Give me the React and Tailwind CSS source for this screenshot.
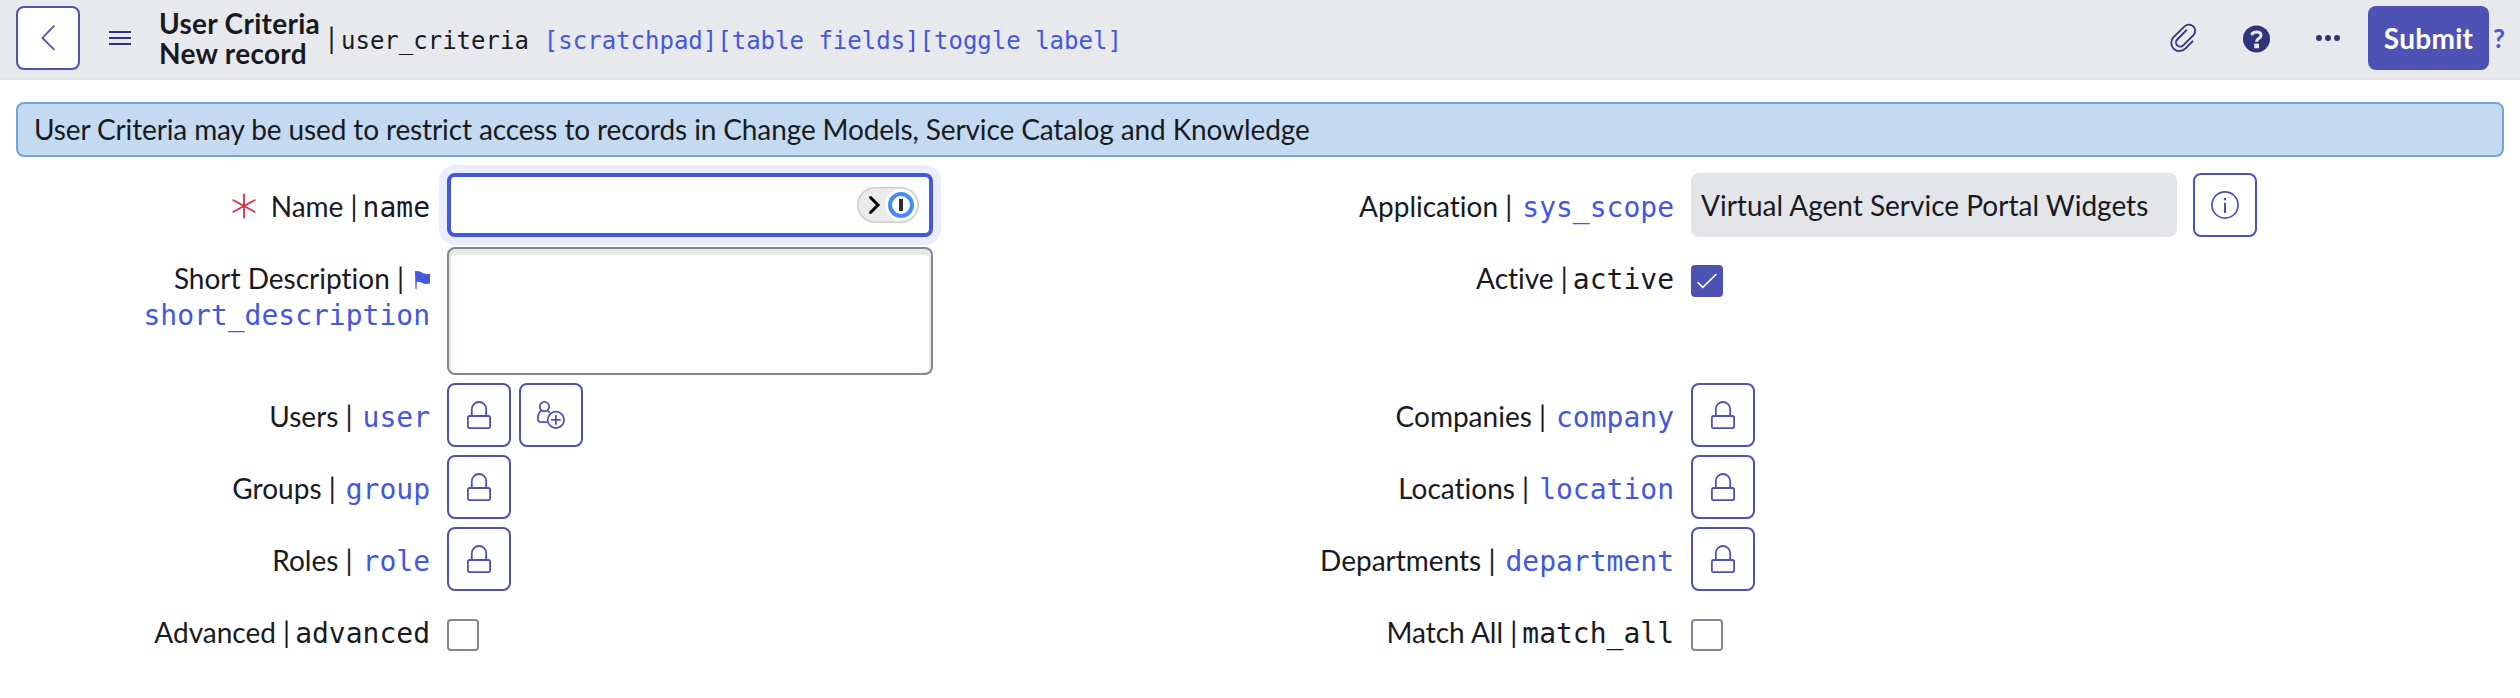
const SANS = "font-['Lato','Liberation_Sans',sans-serif]";
const MONO = "font-['DejaVu_Sans_Mono',monospace]";

function LockIcon() {
  return (
    <svg width="24" height="28" viewBox="0 0 24 28" fill="none" stroke="#4f52b5" strokeWidth="1.8">
      <rect x="0.9" y="15" width="22.2" height="12.1" rx="1.6" />
      <path d="M4.8 15V8.200a7.200 7.200 0 0 1 14.400 0V15" />
    </svg>
  );
}

function UserAddIcon() {
  return (
    <svg width="28" height="28" viewBox="0 0 28 28" fill="none" stroke="#4f52b5" strokeWidth="1.8">
      <circle cx="7.4" cy="5.6" r="4.7" />
      <path d="M4.300 9.400C2 11 .9 14 .9 17.400c0 2.400 1.300 3.700 3.600 3.700h5.600" />
      <path d="M10.500 9.400c1 .6 1.700 1.400 2.300 2.400" />
      <circle cx="18.900" cy="18.900" r="8.200" />
      <path d="M18.900 14v9.800M14 18.900h9.800" />
    </svg>
  );
}

function IconButton({ children, label }) {
  return (
    <button
      aria-label={label}
      className="flex size-16 shrink-0 items-center justify-center rounded-lg border-2 border-[#4f52b5] bg-white"
    >
      {children}
    </button>
  );
}

function Checkbox({ checked }) {
  return (
    <span
      role="checkbox"
      aria-checked={!!checked}
      className={
        checked
          ? "mt-5 flex size-8 items-center justify-center rounded-[4px] bg-[#4f52b5]"
          : "mt-5 flex size-8 rounded-[4px] border-2 border-[#81868f] bg-white"
      }
    >
      {checked && (
        <svg width="20" height="16" viewBox="0 0 20 16" fill="none" stroke="#fff" strokeWidth="1.6">
          <path d="M.6 9.200l5.200 5.200L19.400 1" />
        </svg>
      )}
    </span>
  );
}

function Row({ label, field, link, required, flag, height = "h-[72px]", children }) {
  return (
    <div className={`flex ${height} items-start`}>
      <div className="w-[430px] shrink-0 pt-[15px] text-right leading-9 whitespace-nowrap">
        {required && (
          <svg className="mr-[15px] inline-block align-[-2px]" width="24" height="26" viewBox="0 0 24 26" stroke="#d4313f" strokeWidth="1.8">
            <path d="M12 .8v24.400M.6 6.800l22.800 12.400M23.400 6.800L.6 19.200" />
          </svg>
        )}
        <span>{label} |</span>
        {flag && (
          <svg className="ml-[11px] inline-block align-[0px]" width="15" height="18" viewBox="0 0 15 18" fill="#4457df">
            <path d="M0 .3C3-.4 5.500 .7 7.500 1.900c2.200 1.200 4.500 1.400 7.500 .8v9.800c-3 .8-5.600 .4-7.800-.6-1.900-.9-3.600-1.200-5.500-1V18H.5z" />
          </svg>
        )}
        {flag && <br />}
        <span className={`${MONO} ${link ? "text-[#4457df]" : ""} ${flag ? "" : link ? "ml-[10px]" : "ml-[5px]"}`}>{field}</span>
      </div>
      <div className="ml-[17px] flex gap-2">{children}</div>
    </div>
  );
}

function LockRow({ label, field, extra }) {
  return (
    <Row label={label} field={field} link>
      <IconButton label="Unlock">
        <LockIcon />
      </IconButton>
      {extra}
    </Row>
  );
}

export default function App() {
  return (
    <div className={`${SANS} h-[698px] w-[2520px] overflow-hidden bg-white text-[28px] text-[#181a1f] [font-variant-ligatures:none]`}>
      <header className="flex h-20 items-start border-b-2 border-[#e3e4e8] bg-[#e8e9ed] pt-1.5 pl-4">
        <IconButton label="Back">
          <svg width="14" height="28" viewBox="0 0 14 28" fill="none" stroke="#4f52b5" strokeWidth="1.8">
            <path d="M13.400 1.700L1.400 13.900l12 12" />
          </svg>
        </IconButton>
        <svg className="mt-[24px] ml-[29px]" width="22" height="16" viewBox="0 0 22 16" stroke="#30347a" strokeWidth="2">
          <path d="M0 2h22M0 8h22M0 14h22" />
        </svg>
        <h1 className="mt-[2px] ml-[28px] w-[163px] leading-[30px] font-bold tracking-[0.3px] whitespace-nowrap">
          User Criteria
          <br />
          New record
        </h1>
        <div className="mt-[14px] flex items-baseline leading-[36px] whitespace-nowrap">
          <span className="ml-[6px]">|</span>
          <span className={`${MONO} ml-[6px] text-[24px]`}>user_criteria</span>
          <span className={`${MONO} ml-[15px] text-[24px] text-[#4457df]`}>[scratchpad][table fields][toggle label]</span>
        </div>
        <div className="ml-auto flex items-start pr-[15px]">
          <svg className="mt-[17px] mr-[46px]" width="27" height="30" viewBox="0 0 27 30" fill="none" stroke="#30347a" strokeWidth="1.8" strokeLinecap="round">
            <path d="M22.500 18.300l-7.200 7.400a8.200 8.200 0 0 1-11.700-11.500L14.800 3.200a6.200 6.200 0 0 1 8.900 8.600L13.200 22.400a4.200 4.200 0 0 1-6-5.900l9.300-9.300" />
          </svg>
          <svg className="mt-[19px] mr-[46px]" width="27" height="28" viewBox="0 0 27 28">
            <circle cx="13.500" cy="13.900" r="13.500" fill="#30347a" />
            <path d="M9.200 10.200V8.600c1.200-1.200 2.600-1.600 4.300-1.600 3 0 4.500 1.400 4.500 3.500 0 2.800-4.500 2.700-4.500 6.200" fill="none" stroke="#e8e9ed" strokeWidth="3" />
            <path d="M11.200 18.600h4.800v4.700h-4.800z" fill="#e8e9ed" />
          </svg>
          <svg className="mt-[29px] mr-[28px]" width="24" height="6" viewBox="0 0 24 6" fill="#30347a">
            <circle cx="3" cy="3" r="3" />
            <circle cx="12" cy="3" r="3" />
            <circle cx="21" cy="3" r="3" />
          </svg>
          <button className="h-16 w-[121px] rounded-lg bg-[#4f52b5] font-bold tracking-[0.3px] text-white">Submit</button>
          <span className="mt-[14px] ml-[4px] text-[26px] leading-9 font-bold text-[#4457df]">?</span>
        </div>
      </header>

      <div className="mx-4 mt-[22px] flex h-[55px] items-center rounded-lg border-2 border-[#70a7da] bg-[#c3daf1] pb-0.5 pl-[16px] tracking-[-0.12px]">
        User Criteria may be used to restrict access to records in Change Models, Service Catalog and Knowledge
      </div>

      <main className="flex pt-4">
        <section className="w-[1244px] shrink-0">
          <Row label="Name" field="name" required>
            <div className="flex h-16 w-[486px] items-center justify-end rounded-lg border-4 border-[#4457df] bg-white pr-[10px] shadow-[0_0_0_8px_#eaedfd]">
              <svg width="62" height="36" viewBox="0 0 62 36">
                <rect x="0.8" y="0.8" width="60.4" height="34.400" rx="17.200" fill="#ebebeb" stroke="#cfcfcf" strokeWidth="1.600" />
                <path d="M13.500 10.500l7.500 7.500-7.500 7.500" fill="none" stroke="#000" strokeWidth="3" strokeLinecap="round" />
                <circle cx="44" cy="18" r="16" fill="#fff" />
                <circle cx="44" cy="18" r="11" fill="#fff" stroke="#448bf8" strokeWidth="4" />
                <path d="M42 12h4v12h-4z" fill="#2e2e2e" />
              </svg>
            </div>
          </Row>
          <Row label="Short Description" field="short_description" link flag height="h-[138px]">
            <div className="mt-[2px] h-32 w-[486px] rounded-lg border-2 border-[#81868f] bg-white shadow-[inset_0_6px_0_0_#e7e9e9,inset_2px_0_0_0_#e7e9e9,inset_-2px_0_0_0_#e7e9e9]" />
          </Row>
          <LockRow
            label="Users"
            field="user"
            extra={
              <IconButton label="Add me">
                <UserAddIcon />
              </IconButton>
            }
          />
          <LockRow label="Groups" field="group" />
          <LockRow label="Roles" field="role" />
          <Row label="Advanced" field="advanced">
            <Checkbox />
          </Row>
        </section>

        <section>
          <Row label="Application" field="sys_scope" link>
            <div className="mr-2 flex h-16 w-[486px] items-center rounded-lg bg-[#e4e5e9] pl-[10px] whitespace-nowrap">
              Virtual Agent Service Portal Widgets
            </div>
            <IconButton label="Info">
              <svg width="28" height="28" viewBox="0 0 28 28" fill="none" stroke="#4f52b5" strokeWidth="1.700">
                <circle cx="14" cy="14" r="13.100" />
                <path d="M14 7v2.200M14 11.800V22" strokeWidth="2" />
              </svg>
            </IconButton>
          </Row>
          <Row label="Active" field="active" height="h-[138px]">
            <Checkbox checked />
          </Row>
          <LockRow label="Companies" field="company" />
          <LockRow label="Locations" field="location" />
          <LockRow label="Departments" field="department" />
          <Row label="Match All" field="match_all">
            <Checkbox />
          </Row>
        </section>
      </main>
    </div>
  );
}
